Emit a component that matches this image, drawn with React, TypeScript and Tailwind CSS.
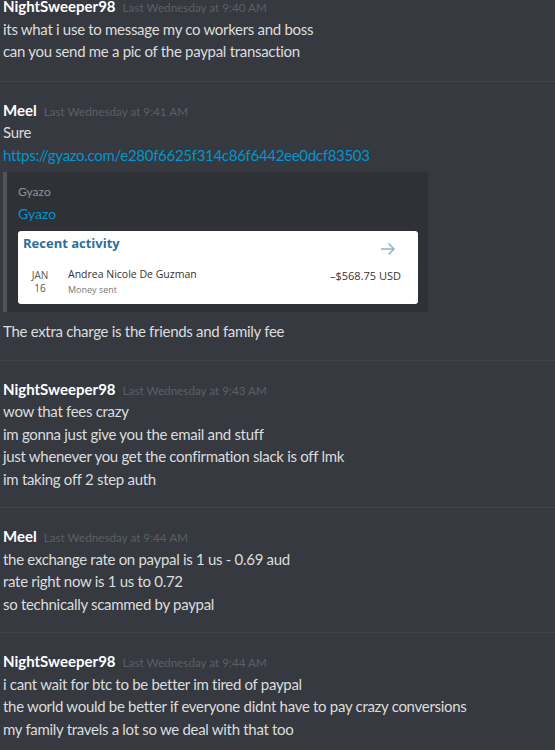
import React from "react";

const font = { fontFamily: "Lato, 'Noto Sans', sans-serif" };

function Header({ name, time }: { name: string; time: string }) {
  return (
    <div className="flex items-baseline h-[22.5px] leading-[22.5px]">
      <span className="text-white text-[15px] font-bold">{name}</span>
      <span className="ml-[7px] text-[11.7px] text-[#5c6066]">{time}</span>
    </div>
  );
}

function Line({ children }: { children: React.ReactNode }) {
  return <div className="text-[15px] leading-[22.5px] tracking-[-0.3px] text-[#dcddde] whitespace-nowrap">{children}</div>;
}

function Group({ children, first }: { children: React.ReactNode; first?: boolean }) {
  return (
    <div className={first ? "-mt-[5px] pb-[18px] pl-[3px] border-b border-[#41444a]" : "pt-[17px] pb-[17px] pl-[3px] border-b border-[#41444a]"}>
      {children}
    </div>
  );
}

export default function App() {
  return (
    <div className="w-[555px] h-[750px] overflow-hidden bg-[#36393f]" style={font}>
      <Group first>
        <Header name="NightSweeper98" time="Last Wednesday at 9:40 AM" />
        <Line>its what i use to message my co workers and boss</Line>
        <Line>can you send me a pic of the paypal transaction</Line>
      </Group>
      <Group>
        <Header name="Meel" time="Last Wednesday at 9:41 AM" />
        <Line>Sure</Line>
        <div className="text-[15px] leading-[22.5px] tracking-[-0.3px] text-[#0096cf]">https://gyazo.com/e280f6625f314c86f6442ee0dcf83503</div>
        <div className="mt-[6px] w-[425px] border-l-4 border-[#4f535a] bg-[#2f3136] rounded-r-[3px] pl-[11px] pr-[10px] pt-[12px] pb-[8px]">
          <div className="text-[12px] leading-[16px] text-[#8e9297]">Gyazo</div>
          <div className="mt-[4px] text-[14px] leading-[20px] text-[#0096cf]">Gyazo</div>
          <div className="mt-[7px] h-[73px] w-[400px] bg-white rounded-[3px] relative" style={{ fontFamily: "'Open Sans', 'Noto Sans', sans-serif" }}>
            <div className="absolute left-[5px] top-[3px] text-[13px] font-bold text-[#2c6f9e]">Recent activity</div>
            <svg className="absolute left-[362px] top-[11px]" width="16" height="14" viewBox="0 0 16 14">
              <path d="M1 7 H14 M8.5 1.5 L14 7 L8.5 12.5" fill="none" stroke="#8fb4c9" strokeWidth="1.5" />
            </svg>
            <div className="absolute left-[12px] top-[38px] w-[20px] text-center text-[10px] leading-[13px] text-[#555]">
              <div>JAN</div>
              <div>16</div>
            </div>
            <div className="absolute left-[50px] top-[36px] text-[10.5px] leading-[14px] text-[#333]">Andrea Nicole De Guzman</div>
            <div className="absolute left-[50px] top-[53px] text-[9px] leading-[12px] text-[#777]">Money sent</div>
            <div className="absolute right-[17px] top-[38px] text-[11px] leading-[14px] text-[#333]">–$568.75 USD</div>
          </div>
        </div>
        <div className="mt-[8px]">
          <Line>The extra charge is the friends and family fee</Line>
        </div>
      </Group>
      <Group>
        <Header name="NightSweeper98" time="Last Wednesday at 9:43 AM" />
        <Line>wow that fees crazy</Line>
        <Line>im gonna just give you the email and stuff</Line>
        <Line>just whenever you get the confirmation slack is off lmk</Line>
        <Line>im taking off 2 step auth</Line>
      </Group>
      <Group>
        <Header name="Meel" time="Last Wednesday at 9:44 AM" />
        <Line>the exchange rate on paypal is 1 us - 0.69 aud</Line>
        <Line>rate right now is 1 us to 0.72</Line>
        <Line>so technically scammed by paypal</Line>
      </Group>
      <Group>
        <Header name="NightSweeper98" time="Last Wednesday at 9:44 AM" />
        <Line>i cant wait for btc to be better im tired of paypal</Line>
        <Line>the world would be better if everyone didnt have to pay crazy conversions</Line>
        <Line>my family travels a lot so we deal with that too</Line>
      </Group>
    </div>
  );
}
